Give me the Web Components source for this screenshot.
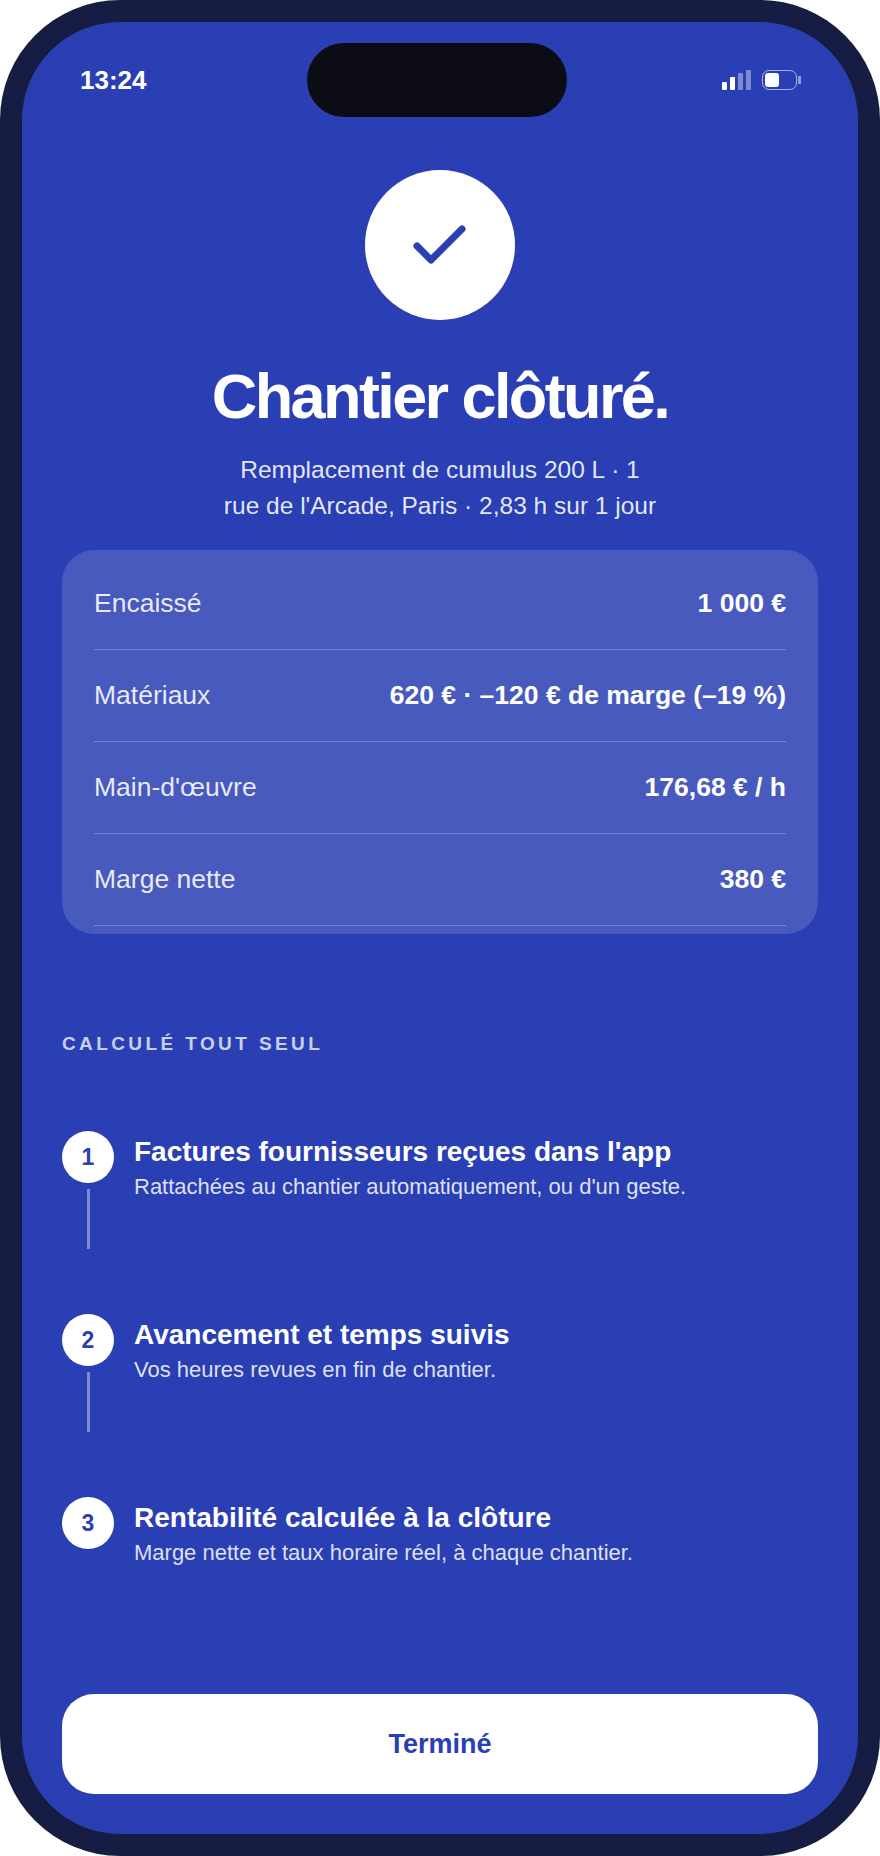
<!DOCTYPE html>
<html lang="fr">
<head>
<meta charset="utf-8">
<title>Chantier clôturé</title>
<style>
    html, body { margin: 0; padding: 0; background: #fff; }
    body { font-family: "Liberation Sans", Arial, sans-serif; }
</style>
</head>
<body>
<phone-frame>
    <status-bar time="13:24"></status-bar>
    <success-head>
        <span slot="title">Chantier clôturé.</span>
        Remplacement de cumulus 200 L · 1<br>rue de l'Arcade, Paris · 2,83 h sur 1 jour
    </success-head>
    <recap-card>
        <recap-row label="Encaissé" value="1 000 €"></recap-row>
        <recap-row label="Matériaux" value="620 € · –120 € de marge (–19 %)"></recap-row>
        <recap-row label="Main-d'œuvre" value="176,68 € / h"></recap-row>
        <recap-row label="Marge nette" value="380 €"></recap-row>
    </recap-card>
    <step-list heading="Calculé tout seul">
        <step-item number="1" title="Factures fournisseurs reçues dans l'app" line>Rattachées au chantier automatiquement, ou d'un geste.</step-item>
        <step-item number="2" title="Avancement et temps suivis" line>Vos heures revues en fin de chantier.</step-item>
        <step-item number="3" title="Rentabilité calculée à la clôture">Marge nette et taux horaire réel, à chaque chantier.</step-item>
    </step-list>
    <done-button>Terminé</done-button>
</phone-frame>

<script>
class PhoneFrame extends HTMLElement {
    constructor() {
        super();
        this.attachShadow({ mode: 'open' });
        this.shadowRoot.innerHTML = `
<style>
    :host {
        display: block;
        width: 880px;
        height: 1856px;
        box-sizing: border-box;
        background: #161d42;
        border-radius: 120px;
        padding: 22px;
    }
    #screen {
        position: relative;
        height: 100%;
        box-sizing: border-box;
        display: flex;
        flex-direction: column;
        background: #2a3fb3;
        border-radius: 98px;
        color: #fff;
        overflow: hidden;
    }
    #island {
        position: absolute;
        left: 285px;
        top: 21px;
        width: 260px;
        height: 74px;
        background: #0c0d14;
        border-radius: 37px;
    }
</style>
<div id="screen">
    <div id="island"></div>
    <slot></slot>
</div>`;
    }
}

class StatusBar extends HTMLElement {
    constructor() {
        super();
        this.attachShadow({ mode: 'open' });
        this.shadowRoot.innerHTML = `
<style>
    :host {
        display: flex;
        justify-content: space-between;
        align-items: center;
        height: 20px;
        padding: 48px 57px 0 58px;
    }
    #time {
        font-size: 26px;
        font-weight: 700;
        line-height: 20px;
    }
    svg { display: block; }
</style>
<span id="time"></span>
<svg width="79" height="20" viewBox="0 0 79 20" fill="#fff">
    <rect x="0" y="12" width="5" height="8" rx="1"/>
    <rect x="8" y="7" width="5" height="13" rx="1"/>
    <rect x="16" y="3" width="5" height="17" rx="1" opacity=".4"/>
    <rect x="24" y="0" width="5" height="20" rx="1" opacity=".4"/>
    <rect x="40.5" y=".5" width="34" height="19" rx="6.5" fill="none" stroke="#fff" stroke-opacity=".6"/>
    <rect x="43" y="3" width="14" height="14" rx="3"/>
    <rect x="76" y="6" width="3" height="8" rx="1" opacity=".5"/>
</svg>`;
        this.shadowRoot.getElementById('time').textContent = this.getAttribute('time');
    }
}

class SuccessHead extends HTMLElement {
    constructor() {
        super();
        this.attachShadow({ mode: 'open' });
        this.shadowRoot.innerHTML = `
<style>
    :host {
        display: flex;
        flex-direction: column;
        align-items: center;
        text-align: center;
        padding-top: 80px;
    }
    #badge {
        width: 150px;
        height: 150px;
        background: #fff;
        border-radius: 50%;
    }
    svg { display: block; }
    h1 {
        margin: 40px 0 0;
        font-size: 63px;
        line-height: 72px;
        font-weight: 700;
        letter-spacing: -2.6px;
    }
    p {
        margin: 20px 0 0;
        font-size: 24.5px;
        line-height: 36px;
        color: rgba(255, 255, 255, .88);
    }
</style>
<div id="badge">
    <svg width="150" height="150" viewBox="0 0 150 150" fill="none">
        <path d="M52 76 66 90 97 59" stroke="#2a3fb3" stroke-width="7" stroke-linecap="round" stroke-linejoin="round"/>
    </svg>
</div>
<h1><slot name="title"></slot></h1>
<p><slot></slot></p>`;
    }
}

class RecapCard extends HTMLElement {
    constructor() {
        super();
        this.attachShadow({ mode: 'open' });
        this.shadowRoot.innerHTML = `
<style>
    :host {
        display: block;
        margin: 26px 40px 0;
        padding: 8px 32px;
        background: rgba(255, 255, 255, .14);
        border-radius: 32px;
    }
</style>
<slot></slot>`;
    }
}

class RecapRow extends HTMLElement {
    constructor() {
        super();
        this.attachShadow({ mode: 'open' });
        this.shadowRoot.innerHTML = `
<style>
    :host {
        display: flex;
        justify-content: space-between;
        align-items: center;
        height: 92px;
        box-sizing: border-box;
        border-bottom: 1px solid rgba(255, 255, 255, .25);
        font-size: 26.5px;
    }
    #label { color: rgba(255, 255, 255, .88); }
    #value { font-weight: 700; }
</style>
<span id="label"></span>
<span id="value"></span>`;
        this.shadowRoot.getElementById('label').textContent = this.getAttribute('label');
        this.shadowRoot.getElementById('value').textContent = this.getAttribute('value');
    }
}

class StepList extends HTMLElement {
    constructor() {
        super();
        this.attachShadow({ mode: 'open' });
        this.shadowRoot.innerHTML = `
<style>
    :host {
        display: block;
        margin: 98px 40px 0;
    }
    h2 {
        margin: 0 0 75px;
        font-size: 19px;
        line-height: 24px;
        font-weight: 700;
        letter-spacing: 3.4px;
        text-transform: uppercase;
        color: rgba(255, 255, 255, .75);
    }
</style>
<h2></h2>
<slot></slot>`;
        this.shadowRoot.querySelector('h2').textContent = this.getAttribute('heading');
    }
}

class StepItem extends HTMLElement {
    constructor() {
        super();
        this.attachShadow({ mode: 'open' });
        this.shadowRoot.innerHTML = `
<style>
    :host {
        display: flex;
        gap: 20px;
        height: 183px;
    }
    #rail {
        display: flex;
        flex-direction: column;
        align-items: center;
        gap: 6px;
        width: 52px;
        flex: none;
    }
    #number {
        width: 52px;
        height: 52px;
        display: flex;
        align-items: center;
        justify-content: center;
        background: #fff;
        border-radius: 50%;
        color: #2a3fb3;
        font-size: 23px;
        font-weight: 700;
    }
    #line {
        width: 3px;
        height: 60px;
        background: rgba(255, 255, 255, .4);
    }
    h3 {
        margin: 4px 0 0;
        font-size: 28px;
        line-height: 34px;
        font-weight: 700;
    }
    p {
        margin: 3px 0 0;
        font-size: 22px;
        line-height: 30px;
        color: rgba(255, 255, 255, .85);
    }
</style>
<div id="rail">
    <div id="number"></div>
    <div id="line"></div>
</div>
<div>
    <h3></h3>
    <p><slot></slot></p>
</div>`;
        this.shadowRoot.getElementById('number').textContent = this.getAttribute('number');
        this.shadowRoot.querySelector('h3').textContent = this.getAttribute('title');
        if (!this.hasAttribute('line')) {
            this.shadowRoot.getElementById('line').style.display = 'none';
        }
    }
}

class DoneButton extends HTMLElement {
    constructor() {
        super();
        this.attachShadow({ mode: 'open' });
        this.shadowRoot.innerHTML = `
<style>
    :host {
        display: block;
        margin: auto 40px 40px;
    }
    button {
        display: block;
        width: 100%;
        height: 100px;
        padding: 0;
        border: none;
        background: #fff;
        border-radius: 32px;
        color: #2a3fb3;
        font: 700 27px "Liberation Sans", Arial, sans-serif;
    }
</style>
<button><slot></slot></button>`;
    }
}

customElements.define('phone-frame', PhoneFrame);
customElements.define('status-bar', StatusBar);
customElements.define('success-head', SuccessHead);
customElements.define('recap-card', RecapCard);
customElements.define('recap-row', RecapRow);
customElements.define('step-list', StepList);
customElements.define('step-item', StepItem);
customElements.define('done-button', DoneButton);
</script>
</body>
</html>
